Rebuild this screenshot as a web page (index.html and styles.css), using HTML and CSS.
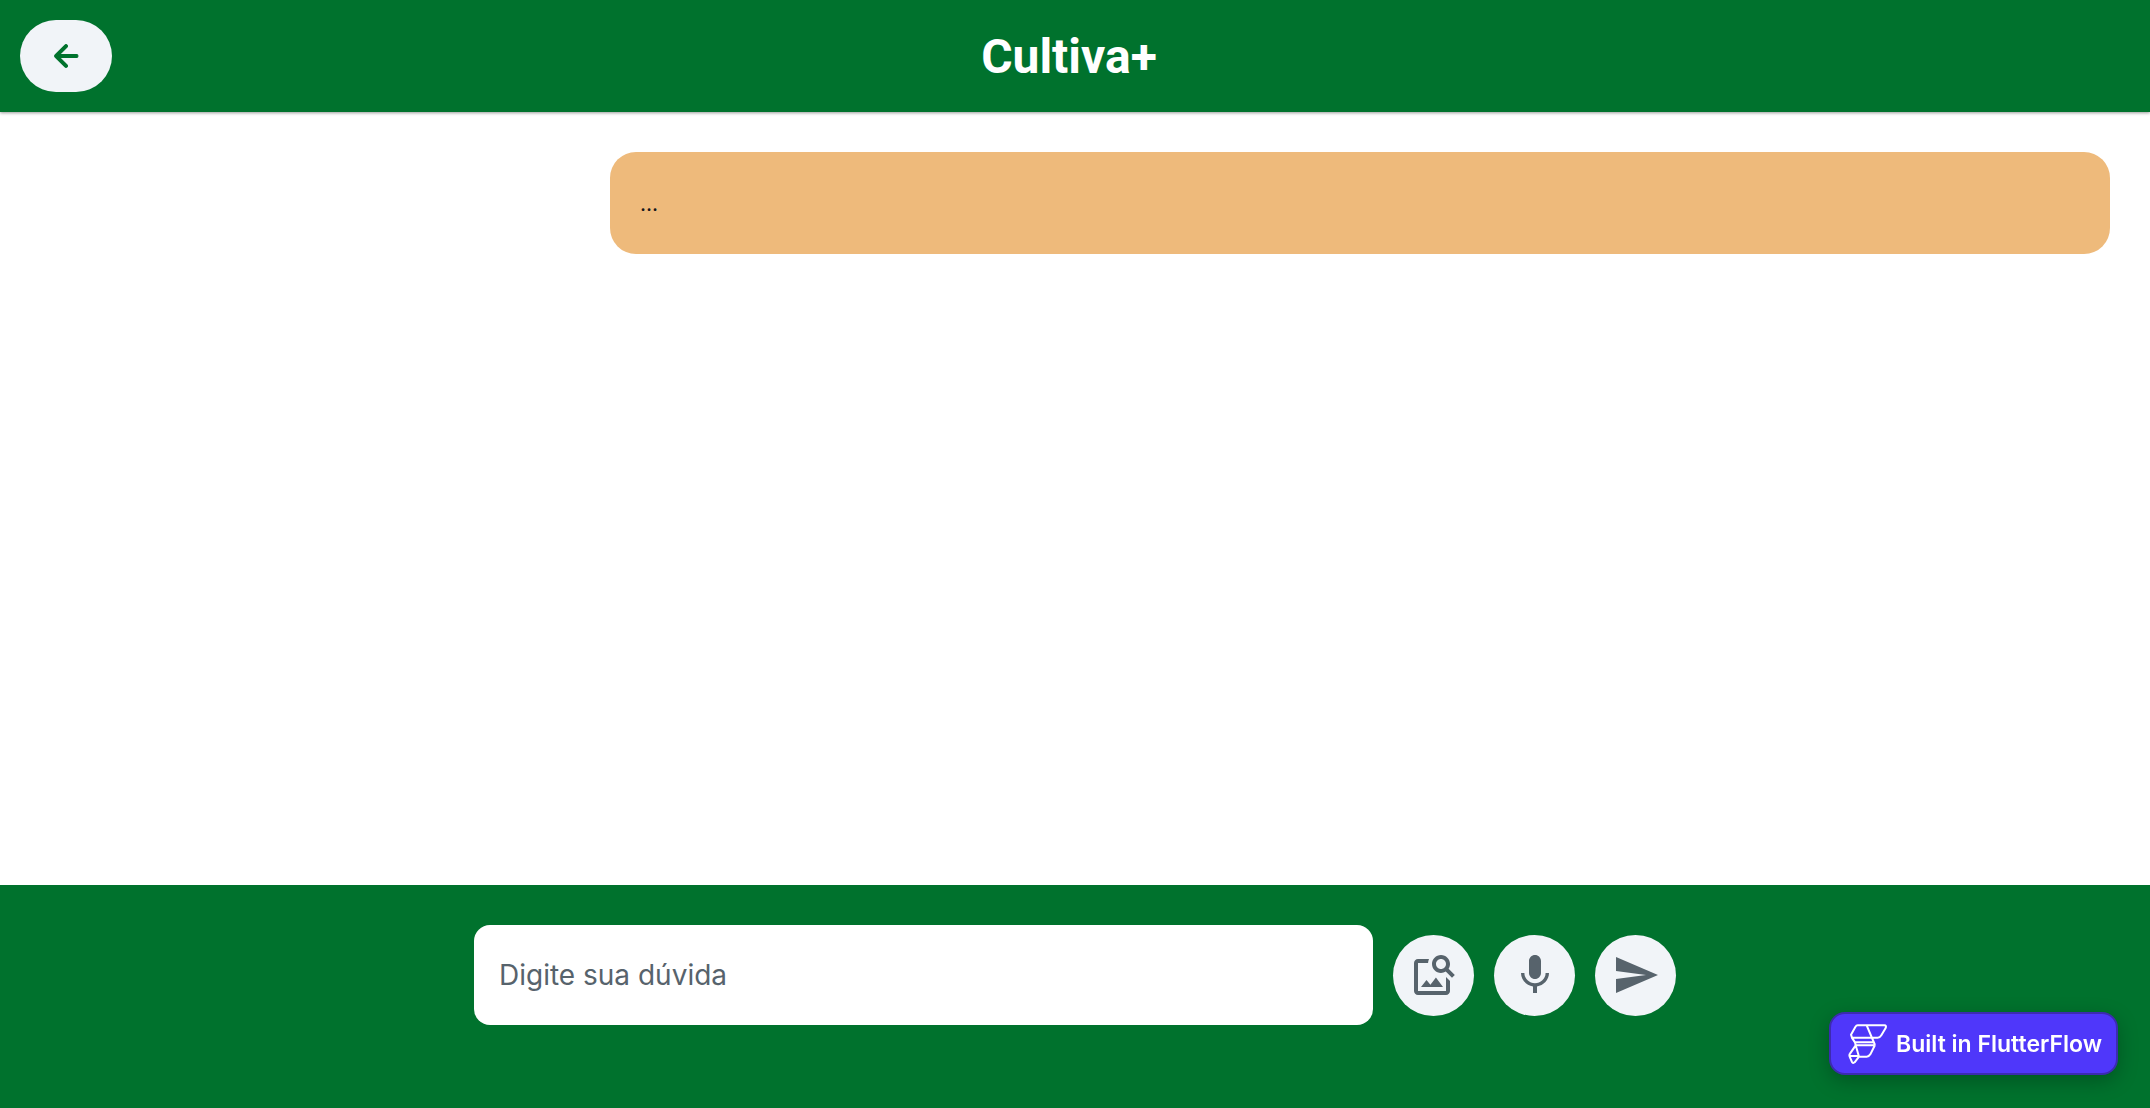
FILE: index.html
```html
<!DOCTYPE html>
<html lang="pt-BR">
<head>
<meta charset="utf-8">
<meta name="viewport" content="width=device-width, initial-scale=1">
<title>Cultiva+</title>
<link rel="stylesheet" href="styles.css">
</head>
<body>
<header class="topbar">
  <button class="back" type="button" aria-label="Voltar">
    <svg class="back-icon" viewBox="0 0 24 24" aria-hidden="true"><path d="M19 11H7.83l4.88-4.88c.39-.39.39-1.03 0-1.42-.39-.39-1.02-.39-1.41 0l-6.59 6.59c-.39.39-.39 1.02 0 1.41l6.59 6.59c.39.39 1.02.39 1.41 0 .39-.39.39-1.02 0-1.41L7.83 13H19c.55 0 1-.45 1-1s-.45-1-1-1z"/></svg>
  </button>
  <h1 class="title">Cultiva+</h1>
</header>
<main class="chat">
  <p class="bubble">...</p>
</main>
<footer class="footer">
  <form class="composer">
    <input class="question" type="text" placeholder="Digite sua dúvida" aria-label="Digite sua dúvida">
    <button class="round" type="button" aria-label="Buscar imagem">
      <svg class="icon" viewBox="0 0 24 24" aria-hidden="true"><path d="M18 13v7H4V6h5.02c.05-.71.22-1.38.48-2H4c-1.1 0-2 .9-2 2v14c0 1.1.9 2 2 2h14c1.1 0 2-.9 2-2v-5l-2-2zm-1.5 5h-11l2.75-3.53 1.96 2.36 2.75-3.54zm2.8-9.11c.44-.7.7-1.51.7-2.39C20 4.01 17.99 2 15.5 2S11 4.01 11 6.5s2.01 4.5 4.49 4.5c.88 0 1.7-.26 2.39-.7L21 13.42 22.42 12 19.3 8.89zM15.5 9C14.12 9 13 7.88 13 6.5S14.12 4 15.5 4 18 5.12 18 6.5 16.88 9 15.5 9z"/></svg>
    </button>
    <button class="round" type="button" aria-label="Gravar áudio">
      <svg class="icon" viewBox="0 0 24 24" aria-hidden="true"><path d="M12 14c1.66 0 2.99-1.34 2.99-3L15 5c0-1.66-1.34-3-3-3S9 3.34 9 5v6c0 1.66 1.34 3 3 3zm5.3-3c0 3-2.54 5.1-5.3 5.1S6.7 14 6.7 11H5c0 3.41 2.72 6.23 6 6.72V21h2v-3.28c3.28-.48 6-3.3 6-6.72h-1.7z"/></svg>
    </button>
    <button class="round" type="submit" aria-label="Enviar">
      <svg class="icon" viewBox="0 0 24 24" aria-hidden="true"><path d="M2.01 21 23 12 2.01 3 2 10l15 2-15 2z"/></svg>
    </button>
  </form>
</footer>
<a class="badge" href="#">
  <svg class="badge-logo" viewBox="18 15 120 126" aria-hidden="true"><path d="M47 22H127Q134 22 131 30L118 52Q114 59 107 59H30L27 50 40 27Q43 22 47 22ZM74 22 99 81M29 58 39 73H94M99 81 85 109Q81 116 74 116H51M40 82H97M39 73 41 82 24 107Q21 111 23 116L30 132Q33 137 38 133L51 116 41 82M23 114H51"/></svg>
  <span>Built in FlutterFlow</span>
</a>
</body>
</html>
```
FILE: styles.css
```css
* {
  box-sizing: border-box;
}

body {
  display: flex;
  flex-direction: column;
  min-height: 100vh;
  margin: 0;
  background: #fff;
  font-family: Inter, "Liberation Sans", sans-serif;
}

.topbar {
  display: grid;
  grid-template-columns: 92px 1fr 104px;
  align-items: center;
  padding: 20px;
  background: #00722d;
  box-shadow: 0 1px 3px rgba(0, 0, 0, 0.4);
}

.back,
.round {
  display: flex;
  align-items: center;
  justify-content: center;
  padding: 0;
  border: 0;
  background: #f1f4f8;
}

.back {
  height: 72px;
  border-radius: 36px;
}

.back-icon {
  width: 36px;
  height: 36px;
  fill: #00722d;
  stroke: #00722d;
  stroke-width: 0.7;
}

.title {
  margin: 0;
  padding-top: 2px;
  color: #fff;
  font: 700 48px/56px Roboto, sans-serif;
  text-align: center;
}

.chat {
  display: flex;
  flex: 1;
  flex-direction: column;
  align-items: flex-end;
  padding: 40px;
}

.bubble {
  width: 100%;
  max-width: 1500px;
  margin: 0;
  padding: 37px 30px 35px;
  border-radius: 26px;
  background: #eeba7b;
  color: #14181b;
  font-size: 21px;
  line-height: 30px;
}

.footer {
  padding: 40px 20px 83px;
  background: #00722d;
}

.composer {
  display: flex;
  align-items: center;
  gap: 20px;
  max-width: 1202px;
  margin: 0 auto;
}

.question {
  flex: 1;
  min-width: 0;
  height: 100px;
  padding: 0 25px;
  border: 0;
  border-radius: 16px;
  background: #fff;
  color: #14181b;
  font: 400 28px/36px Inter, sans-serif;
}

.question::placeholder {
  color: #57636c;
  opacity: 1;
}

.round {
  flex: none;
  width: 81px;
  height: 81px;
  border-radius: 50%;
}

.icon {
  width: 48px;
  height: 48px;
  fill: #57636c;
}

.badge {
  position: fixed;
  right: 32px;
  bottom: 33px;
  display: flex;
  align-items: center;
  gap: 8px;
  height: 63px;
  padding: 0 14px 0 17px;
  border: 2px solid #3c2bb0;
  border-radius: 16px;
  background: #4f37fa;
  box-shadow: 0 6px 20px rgba(0, 0, 0, 0.25);
  color: #fff;
  font-size: 23px;
  font-weight: 600;
  line-height: 30px;
  text-decoration: none;
  white-space: nowrap;
}

.badge-logo {
  width: 40px;
  height: 42px;
  fill: none;
  stroke: #fff;
  stroke-width: 6;
  stroke-linejoin: round;
}
```
